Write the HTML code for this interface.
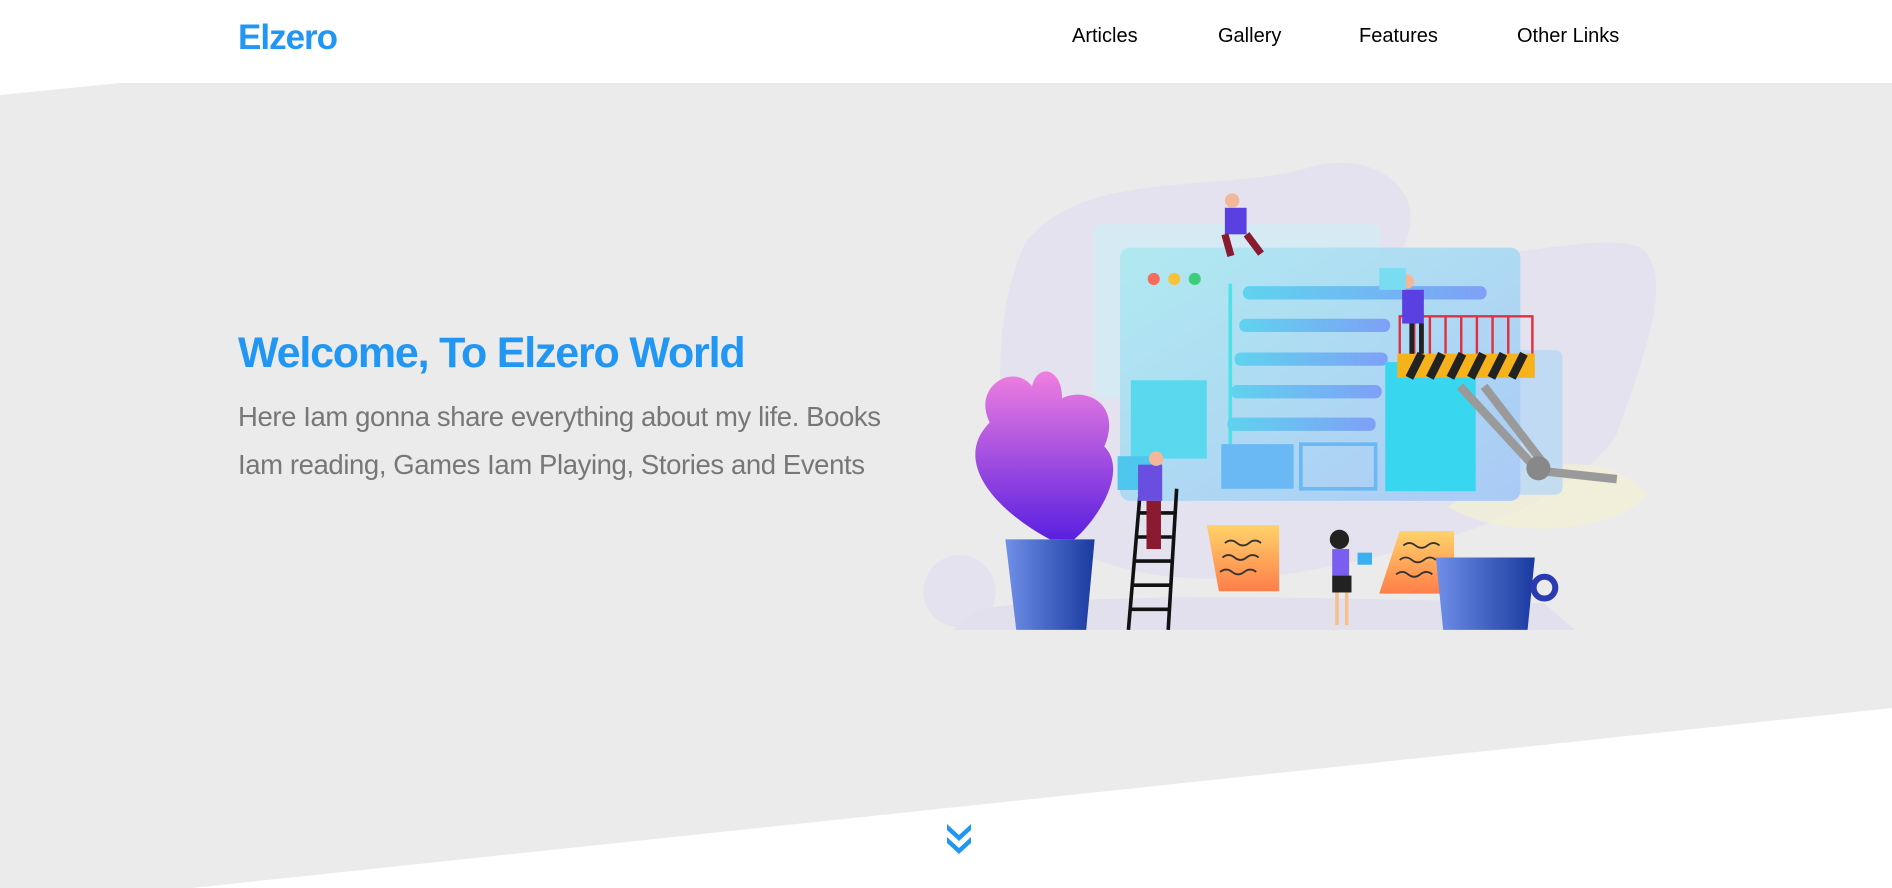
<!DOCTYPE html>
<html><head><meta charset="utf-8"><style>
*{margin:0;padding:0;box-sizing:border-box}
body{width:1892px;height:888px;overflow:hidden;background:#fff;font-family:"Liberation Sans",sans-serif;position:relative}
.bg{position:absolute;left:0;top:0}
.logo{position:absolute;left:238px;top:18px;font-size:35px;font-weight:bold;color:#2196f3;letter-spacing:-1px}
.nav a{position:absolute;top:25px;font-size:20px;color:#000;text-decoration:none}
h1{position:absolute;left:238px;top:329px;font-size:43px;color:#2196f3;letter-spacing:-1.2px;font-weight:bold;white-space:nowrap}
p{position:absolute;left:238px;top:393px;font-size:27.5px;line-height:48px;color:#777;letter-spacing:-0.4px;white-space:nowrap}
</style></head><body>
<svg class="bg" width="1892" height="888"><polygon points="0,95 120,83 1892,83 1892,708 192,888 0,888" fill="#ebebeb"/></svg>
<div class="logo">Elzero</div>
<div class="nav"><a style="left:1072px">Articles</a><a style="left:1218px">Gallery</a><a style="left:1359px">Features</a><a style="left:1517px">Other Links</a></div>
<h1>Welcome, To Elzero World</h1>
<p>Here Iam gonna share everything about my life. Books<br>Iam reading, Games Iam Playing, Stories and Events</p>
<svg style="position:absolute;left:921px;top:157px" width="738" height="473" viewBox="763 130 612 392">
<defs>
<linearGradient id="pn" x1="0" y1="0" x2="1" y2="1"><stop offset="0" stop-color="#aee9f0"/><stop offset="1" stop-color="#a9c9f6"/></linearGradient>
<linearGradient id="br" x1="0" x2="1"><stop offset="0" stop-color="#5fd3ee"/><stop offset="1" stop-color="#7fa0f6"/></linearGradient>
<linearGradient id="pot" x1="0" x2="1"><stop offset="0" stop-color="#6f8fe8"/><stop offset="1" stop-color="#1a3aa0"/></linearGradient>
<linearGradient id="lf" x1="0" y1="0" x2="0" y2="1"><stop offset="0" stop-color="#f07fe0"/><stop offset="1" stop-color="#5a20e0"/></linearGradient>
<linearGradient id="nt" x1="0" y1="0" x2="0" y2="1"><stop offset="0" stop-color="#ffd36a"/><stop offset="1" stop-color="#ff7e4a"/></linearGradient>
</defs>
<path d="M850,200 C900,140 1000,160 1080,140 C1140,120 1190,160 1160,210 C1250,220 1320,190 1360,205 C1390,230 1360,300 1340,360 C1300,420 1200,450 1100,470 C1000,490 900,480 860,430 C820,380 820,260 850,200Z" fill="#e4e2ee"/>
<circle cx="795" cy="490" r="30" fill="#e4e2ee"/>
<path d="M790,522 L810,505 C900,490 1100,495 1280,500 L1305,522Z" fill="#e2e0ec"/>
<path d="M1200,420 C1260,380 1330,370 1365,410 C1340,440 1250,450 1200,420Z" fill="#f3efd6" opacity=".8"/>
<rect x="906" y="185" width="238" height="145" rx="8" fill="#d4ebf3" opacity=".9"/>
<rect x="1160" y="290" width="135" height="120" rx="6" fill="#b8d8f5" opacity=".8"/>
<rect x="928" y="205" width="332" height="210" rx="8" fill="url(#pn)" opacity=".95"/>
<circle cx="956" cy="231" r="5" fill="#f76b5c"/><circle cx="973" cy="231" r="5" fill="#f6c339"/><circle cx="990" cy="231" r="5" fill="#3dcc7a"/>
<rect x="1018" y="235" width="3" height="165" fill="#4fe0e8"/>
<rect x="1030" y="237" width="202" height="11" rx="5" fill="url(#br)"/>
<rect x="1027" y="264" width="125" height="11" rx="5" fill="url(#br)"/>
<rect x="1023" y="292" width="127" height="11" rx="5" fill="url(#br)"/>
<rect x="1020" y="319" width="125" height="11" rx="5" fill="url(#br)"/>
<rect x="1017" y="346" width="123" height="11" rx="5" fill="url(#br)"/>
<rect x="937" y="315" width="63" height="65" fill="#5ad8ee"/>
<rect x="926" y="378" width="36" height="28" fill="#4fc6ee"/>
<rect x="1012" y="368" width="60" height="37" fill="#6ab8f4"/>
<rect x="1078" y="368" width="62" height="37" fill="none" stroke="#6ab8f4" stroke-width="3"/>
<rect x="1148" y="300" width="75" height="107" fill="#39d6ef"/>
<path d="M1210,320 L1270,385 M1230,320 L1280,385 M1275,390 L1340,397" stroke="#9a9a9a" stroke-width="7" fill="none"/>
<circle cx="1275" cy="388" r="10" fill="#888"/>
<path d="M1160,293 V262 H1270 V293 M1172,262V293 M1185,262V293 M1198,262V293 M1211,262V293 M1224,262V293 M1237,262V293 M1250,262V293" stroke="#e03040" stroke-width="2" fill="none"/>
<rect x="1158" y="293" width="114" height="20" fill="#f5b21a"/>
<path d="M1168,313 L1178,293 M1185,313 L1195,293 M1202,313 L1212,293 M1219,313 L1229,293 M1236,313 L1246,293 M1253,313 L1263,293" stroke="#222" stroke-width="7"/>
<path d="M870,447 C820,420 790,380 820,350 C805,320 840,300 855,320 C860,300 880,305 880,330 C900,320 930,335 915,370 C935,390 910,430 890,447Z" fill="url(#lf)"/>
<path d="M833,447 H907 L900,522 H842Z" fill="url(#pot)"/>
<path d="M945,405 L935,522 M975,405 L968,522 M943,425H973 M941,445H971 M939,465H970 M938,485H969 M936,505H968" stroke="#111" stroke-width="3"/>
<rect x="943" y="385" width="20" height="30" fill="#6a4ee0"/><circle cx="958" cy="380" r="6" fill="#f5b79a"/><rect x="950" y="415" width="12" height="40" fill="#8a1a30"/>
<rect x="1015" y="172" width="18" height="22" fill="#5a40e0"/><circle cx="1021" cy="166" r="6" fill="#f5b79a"/><path d="M1015,194 L1020,212 M1033,194 L1045,210" stroke="#8a1a30" stroke-width="6"/>
<rect x="1162" y="240" width="18" height="28" fill="#5a40e0"/><circle cx="1166" cy="233" r="6" fill="#f5b79a"/><path d="M1170,268V293 M1178,268V293" stroke="#222" stroke-width="4"/>
<rect x="1143" y="222" width="22" height="18" fill="#7adcf0"/>
<path d="M1000,435 H1060 V490 H1010Z" fill="url(#nt)"/>
<path d="M1160,440 H1205 V492 H1143Z" fill="url(#nt)"/>
<path d="M1015,450 q5,-4 10,0 t10,0 t10,0 M1013,462 q5,-4 10,0 t10,0 t10,0 M1011,474 q5,-4 10,0 t10,0 t10,0 M1163,452 q5,-4 10,0 t10,0 t10,0 M1160,464 q5,-4 10,0 t10,0 t10,0 M1157,476 q5,-4 10,0 t10,0 t10,0" stroke="#333" fill="none" stroke-width="1.5"/>
<circle cx="1110" cy="447" r="8" fill="#222"/><rect x="1104" y="455" width="14" height="22" fill="#7a5ef0"/><rect x="1104" y="477" width="16" height="14" fill="#222"/><path d="M1108,491V518 M1116,491V518" stroke="#f5c090" stroke-width="3"/><rect x="1125" y="458" width="12" height="10" fill="#3ab0f0"/>
<path d="M1190,462 H1272 L1266,522 H1196Z" fill="url(#pot)"/>
<circle cx="1280" cy="487" r="9" fill="none" stroke="#2a3ab0" stroke-width="5"/>
</svg>
<svg style="position:absolute;left:947px;top:821px" width="24" height="33" viewBox="0 0 24 33"><path d="M0,3 L12,14 L24,3 L24,9 L12,20 L0,9Z M0,16 L12,27 L24,16 L24,22 L12,33 L0,22Z" fill="#2196f3"/></svg>
</body></html>
